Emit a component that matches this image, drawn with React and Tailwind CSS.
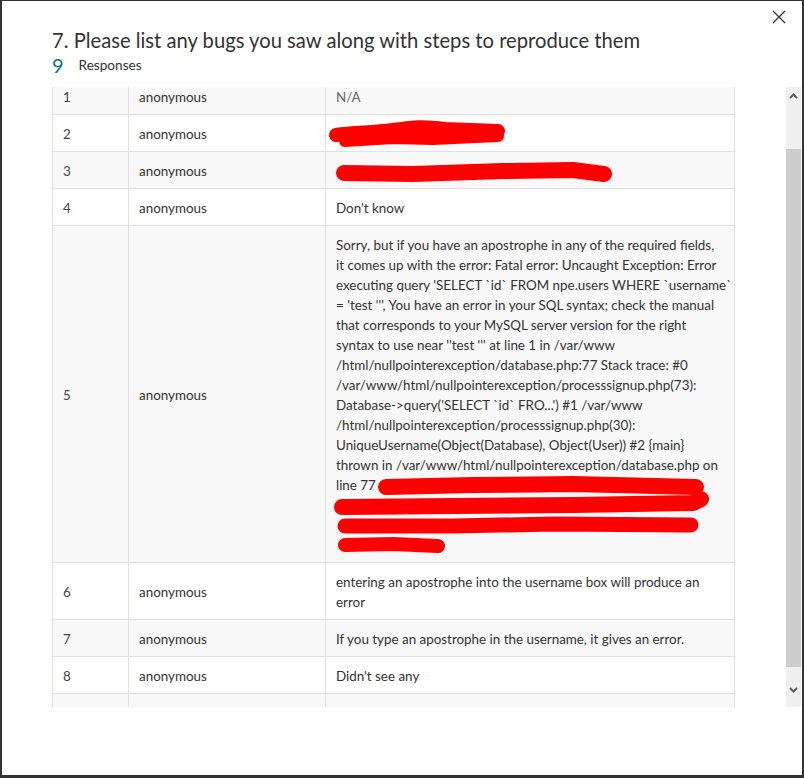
import React from "react";

const font = { fontFamily: "Lato, 'Open Sans', sans-serif" };

const longAnswer = [
  "Sorry, but if you have an apostrophe in any of the required fields,",
  "it comes up with the error: Fatal error: Uncaught Exception: Error",
  "executing query 'SELECT `id` FROM npe.users WHERE `username`",
  "= 'test ''', You have an error in your SQL syntax; check the manual",
  "that corresponds to your MySQL server version for the right",
  "syntax to use near ''test ''' at line 1 in /var/www",
  "/html/nullpointerexception/database.php:77 Stack trace: #0",
  "/var/www/html/nullpointerexception/processsignup.php(73):",
  "Database->query('SELECT `id` FRO...') #1 /var/www",
  "/html/nullpointerexception/processsignup.php(30):",
  "UniqueUsername(Object(Database), Object(User)) #2 {main}",
  "thrown in /var/www/html/nullpointerexception/database.php on",
  "line 77",
  "\u00a0",
  "\u00a0",
  "\u00a0",
];

const rows = [
  { n: "1", lines: ["N/A"], muted: true },
  { n: "2", lines: ["\u00a0"] },
  { n: "3", lines: ["\u00a0"] },
  { n: "4", lines: ["Don't know"] },
  { n: "5", lines: longAnswer },
  { n: "6", lines: ["entering an apostrophe into the username box will produce an", "error"] },
  { n: "7", lines: ["If you type an apostrophe in the username, it gives an error."] },
  { n: "8", lines: ["Didn't see any"] },
  { n: "", lines: ["\u00a0"] },
];

// red marker strokes over the table, coords relative to the table's top-left
const Redactions = () => (
  <svg className="absolute left-0 top-0 pointer-events-none" width="683" height="700">
    <g fill="none" stroke="#ff0000" strokeLinecap="round" strokeLinejoin="round">
      <path strokeWidth="14" d="M283 57 C300 54 318 55 340 52 S370 48 392 51 L445 53" />
      <path strokeWidth="12" d="M292 63 L340 60 L380 61 L445 58" />
      <path strokeWidth="16" d="M291 95 L360 96 L450 93 L520 92 L551 96" />
      <path strokeWidth="16" d="M333 409 L420 407 L520 406 L643 409" />
      <path strokeWidth="16" d="M289 429 L400 428 L520 427 L640 425 L648 421" />
      <path strokeWidth="15" d="M292 448 L400 448 L500 446 L638 447" />
      <path strokeWidth="14" d="M292 467 L340 466 L385 468" />
    </g>
  </svg>
);

const Chevron = ({ down }) => (
  <svg width="9" height="6" viewBox="0 0 9 6" className={down ? "rotate-180" : ""}>
    <path d="M1 5 L4.5 1.5 L8 5" fill="none" stroke="#5f5f5f" strokeWidth="2" />
  </svg>
);

export default function App() {
  return (
    <div className="h-[778px] w-[804px] bg-[#333333] pl-[2px] pr-[2px] pt-[1px] pb-[3px]" style={font}>
      <div className="relative h-full w-full bg-white pl-[50px] pr-[1px]">
        <button className="absolute right-[16px] top-[9px] p-0">
          <svg width="14" height="14" viewBox="0 0 14 14">
            <path d="M1 1 L13 13 M13 1 L1 13" stroke="#333" strokeWidth="1.3" />
          </svg>
        </button>

        <div className="pt-[25px] text-[#333333]">
          <h1 className="text-[20.2px] leading-[28px]">
            7. Please list any bugs you saw along with steps to reproduce them
          </h1>
          <div className="flex h-[22px] items-end">
            <span className="text-[20px] leading-[22px] text-[#03787c]">9</span>
            <span className="ml-[15px] pb-[2px] text-[13.6px] leading-[18px]">Responses</span>
          </div>
        </div>

        <div className="mt-[11px] flex h-[620px]">
          <div className="relative w-[683px] overflow-hidden">
            <div className="relative -mt-[9px] border-l border-[#e1e1e1] text-[13.4px] leading-[20px] text-[#333333]">
              {rows.map((r, i) => (
                <div
                  key={i}
                  className={`grid grid-cols-[76px_197px_409px] border-b border-[#e1e1e1] ${
                    i % 2 === 0 ? "bg-[#f8f8f8]" : "bg-white"
                  }`}
                >
                  <div className="flex items-center border-r border-[#e1e1e1] px-[10px] pt-[9px] pb-[7px] text-[#444]">
                    {r.n}
                  </div>
                  <div className="flex items-center border-r border-[#e1e1e1] px-[10px] pt-[9px] pb-[7px]">
                    {r.n ? "anonymous" : ""}
                  </div>
                  <div className={`border-r border-[#e1e1e1] px-[10px] pt-[9px] pb-[7px] ${r.muted ? "text-[#666]" : ""}`}>
                    {r.lines.map((l, j) => (
                      <div key={j} className="whitespace-nowrap">
                        {l}
                      </div>
                    ))}
                  </div>
                </div>
              ))}
              <Redactions />
            </div>
          </div>

          <div className="ml-[51px] flex w-[15px] flex-col bg-[#f0f0f0]">
            <div className="flex h-[17px] items-center justify-center">
              <Chevron />
            </div>
            <div className="mt-[45px] h-[518px] bg-[#cdcdcd]" />
            <div className="flex flex-1 items-center justify-center pt-[6px]">
              <Chevron down />
            </div>
          </div>
        </div>
      </div>
    </div>
  );
}
